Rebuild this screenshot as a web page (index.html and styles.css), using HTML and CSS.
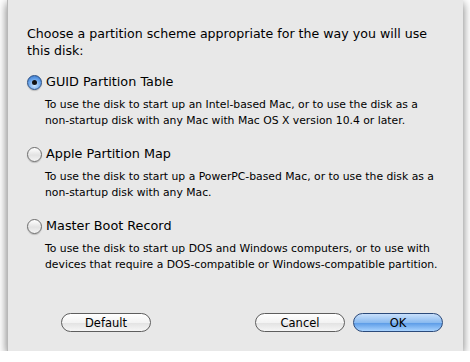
FILE: index.html
```html
<!DOCTYPE html>
<html lang="en">
<head>
    <meta charset="UTF-8">
    <title>Partition Scheme</title>
    <link rel="stylesheet" href="styles.css">
</head>
<body>
    <div class="sheet">
        <p class="prompt">Choose a partition scheme appropriate for the way you will use this disk:</p>

        <div class="option">
            <label class="radio-row"><span class="radio checked"></span>GUID Partition Table</label>
            <p class="desc">To use the disk to start up an Intel-based Mac, or to use the disk as a non-startup disk with any Mac with Mac OS X version 10.4 or later.</p>
        </div>
        <div class="option">
            <label class="radio-row"><span class="radio"></span>Apple Partition Map</label>
            <p class="desc">To use the disk to start up a PowerPC-based Mac, or to use the disk as a non-startup disk with any Mac.</p>
        </div>
        <div class="option">
            <label class="radio-row"><span class="radio"></span>Master Boot Record</label>
            <p class="desc">To use the disk to start up DOS and Windows computers, or to use with devices that require a DOS-compatible or Windows-compatible partition.</p>
        </div>

        <div class="buttons">
            <button class="btn">Default</button>
            <span class="spacer"></span>
            <button class="btn">Cancel</button>
            <button class="btn primary">OK</button>
        </div>
    </div>
</body>
</html>
```

FILE: styles.css
```css
body {
    margin: 0;
    background-color: #ffffff;
    font-family: 'DejaVu Sans', sans-serif;
    color: #000000;
}
.sheet {
    margin-left: 7px;
    width: 456px;
    height: 351px;
    box-sizing: border-box;
    padding: 25px 14px 0 19px;
    background-color: #e8e8e8;
    border-left: 1px solid #b8b8b8;
    box-shadow: 0 3px 9px rgba(0, 0, 0, 0.55);
}
.prompt {
    margin: 0 6px 14px 0;
    font-size: 12.6px;
    line-height: 17px;
}
.option {
    margin-bottom: 16px;
}
.radio-row {
    display: flex;
    align-items: center;
    gap: 4px;
    font-size: 12.8px;
    line-height: 18px;
}
.radio {
    width: 13px;
    height: 13px;
    border-radius: 50%;
    border: 1px solid #6d6d6d;
    background: linear-gradient(#ffffff, #e2e2e2 55%, #f4f4f4);
    box-shadow: 0 1px 1px rgba(0, 0, 0, 0.2);
    position: relative;
}
.radio.checked {
    border-color: #2a4f83;
    background: radial-gradient(circle at 50% 70%, #cfe8ff, #5e9ce6 60%, #2f6ac0);
}
.radio.checked::after {
    content: '';
    position: absolute;
    left: 4px;
    top: 4px;
    width: 5px;
    height: 5px;
    border-radius: 50%;
    background-color: #111;
}
.desc {
    margin: 6px 5px 0 18px;
    font-size: 10.8px;
    line-height: 16px;
}
.buttons {
    display: flex;
    gap: 8px;
    margin-top: 40px;
    padding: 0 6px 0 34px;
}
.spacer {
    flex: 1;
}
.btn {
    width: 90px;
    height: 19px;
    padding: 0;
    border: 1px solid #5e5e5e;
    border-radius: 10px;
    background: linear-gradient(#ffffff, #f3f3f3 50%, #e2e2e2 52%, #f6f6f6);
    font-family: 'DejaVu Sans', sans-serif;
    font-size: 11.5px;
    color: #000;
}
.btn.primary {
    border-color: #2b4a7a;
    background: linear-gradient(#c9e0fb, #8bbbf0 50%, #5a9ae6 52%, #a8d3ff);
}
```
